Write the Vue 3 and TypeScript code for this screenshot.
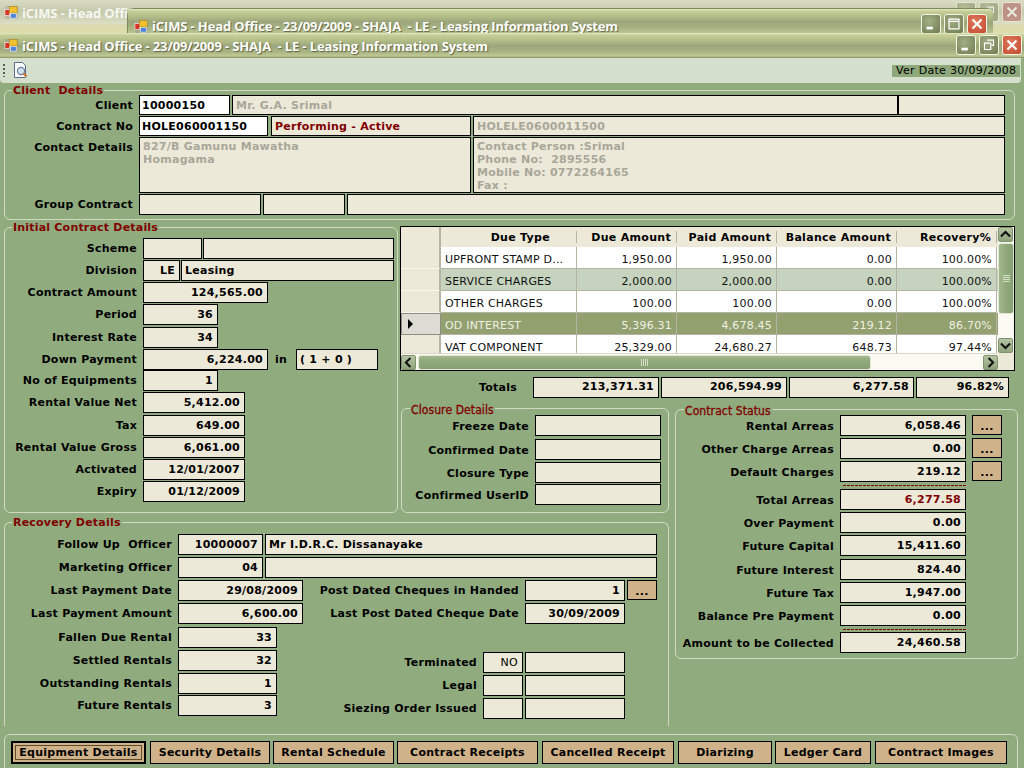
<script setup lang="ts">
interface FieldIn { x: number; e: number; t?: string; k?: string }
interface RowIn { y: number; h?: number; l?: string; f: FieldIn[] }

function mk(topY: number, leftX: number, rows: RowIn[]) {
  let bottom = topY
  return rows.map((r) => {
    const h = r.h ?? 21
    const mt = r.y - bottom
    bottom = r.y + h
    let right = r.f[0].x
    const lw = r.f[0].x - leftX
    const fields = r.f.map((f) => {
      const ml = f.x - right
      right = f.e
      return { ...f, ml, w: f.e - f.x }
    })
    return { label: r.l ?? '', h, mt, lw, fields }
  })
}

const R = 'r'
const sections = [
  {
    cls: 'client', title: 'Client  Details',
    cols: [{ rows: mk(91, 5, [
      { y: 95, h: 20, l: 'Client', f: [
        { x: 139, e: 230, t: '10000150', k: 'w' }, { x: 232, e: 898, t: 'Mr. G.A. Srimal', k: 'g' }, { x: 898, e: 1005 } ] },
      { y: 116, h: 20, l: 'Contract No', f: [
        { x: 139, e: 268, t: 'HOLE060001150', k: 'w' }, { x: 271, e: 471, t: 'Performing - Active', k: 'red' }, { x: 473, e: 1005, t: 'HOLELE0600011500', k: 'g' } ] },
      { y: 137, h: 56, l: 'Contact Details', f: [
        { x: 139, e: 471, t: '827/B Gamunu Mawatha\nHomagama', k: 'g m' },
        { x: 473, e: 1005, t: 'Contact Person :Srimal\nPhone No:  2895556\nMobile No: 0772264165\nFax :', k: 'g m' } ] },
      { y: 194, l: 'Group Contract', f: [ { x: 139, e: 261 }, { x: 263, e: 345 }, { x: 347, e: 1005 } ] },
    ]) }],
  },
  {
    cls: 'initial', title: 'Initial Contract Details',
    cols: [{ rows: mk(228, 5, [
      { y: 238, l: 'Scheme', f: [ { x: 143, e: 202 }, { x: 203, e: 394 } ] },
      { y: 260, l: 'Division', f: [ { x: 143, e: 180, t: 'LE', k: R }, { x: 181, e: 394, t: 'Leasing' } ] },
      { y: 282, l: 'Contract Amount', f: [ { x: 143, e: 268, t: '124,565.00', k: R } ] },
      { y: 304, l: 'Period', f: [ { x: 143, e: 218, t: '36', k: R } ] },
      { y: 327, l: 'Interest Rate', f: [ { x: 143, e: 218, t: '34', k: R } ] },
      { y: 349, l: 'Down Payment', f: [ { x: 143, e: 268, t: '6,224.00', k: R }, { x: 275, e: 296, t: 'in', k: 'plain' }, { x: 296, e: 378, t: '( 1 + 0 )' } ] },
      { y: 370, l: 'No of Equipments', f: [ { x: 143, e: 218, t: '1', k: R } ] },
      { y: 392, l: 'Rental Value Net', f: [ { x: 143, e: 245, t: '5,412.00', k: R } ] },
      { y: 415, l: 'Tax', f: [ { x: 143, e: 245, t: '649.00', k: R } ] },
      { y: 437, l: 'Rental Value Gross', f: [ { x: 143, e: 245, t: '6,061.00', k: R } ] },
      { y: 459, l: 'Activated', f: [ { x: 143, e: 245, t: '12/01/2007', k: R } ] },
      { y: 481, l: 'Expiry', f: [ { x: 143, e: 245, t: '01/12/2009', k: R } ] },
    ]) }],
  },
  {
    cls: 'closure', title: 'Closure Details',
    cols: [{ rows: mk(409, 402, [
      { y: 415, l: 'Freeze Date', f: [ { x: 535, e: 661 } ] },
      { y: 439, l: 'Confirmed Date', f: [ { x: 535, e: 661 } ] },
      { y: 462, l: 'Closure Type', f: [ { x: 535, e: 661 } ] },
      { y: 484, l: 'Confirmed UserID', f: [ { x: 535, e: 661 } ] },
    ]) }],
  },
  {
    cls: 'status', title: 'Contract Status',
    cols: [{ rows: mk(410, 676, [
      { y: 415, l: 'Rental Arreas', f: [ { x: 840, e: 966, t: '6,058.46', k: R }, { x: 972, e: 1002, t: '...', k: 'btn' } ] },
      { y: 438, l: 'Other Charge Arreas', f: [ { x: 840, e: 966, t: '0.00', k: R }, { x: 972, e: 1002, t: '...', k: 'btn' } ] },
      { y: 461, l: 'Default Charges', f: [ { x: 840, e: 966, t: '219.12', k: R }, { x: 972, e: 1002, t: '...', k: 'btn' } ] },
      { y: 485, h: 1, f: [ { x: 843, e: 966, k: 'dash' } ] },
      { y: 489, l: 'Total Arreas', f: [ { x: 840, e: 966, t: '6,277.58', k: 'r redt' } ] },
      { y: 512, l: 'Over Payment', f: [ { x: 840, e: 966, t: '0.00', k: R } ] },
      { y: 535, l: 'Future Capital', f: [ { x: 840, e: 966, t: '15,411.60', k: R } ] },
      { y: 559, l: 'Future Interest', f: [ { x: 840, e: 966, t: '824.40', k: R } ] },
      { y: 582, l: 'Future Tax', f: [ { x: 840, e: 966, t: '1,947.00', k: R } ] },
      { y: 605, l: 'Balance Pre Payment', f: [ { x: 840, e: 966, t: '0.00', k: R } ] },
      { y: 629, h: 1, f: [ { x: 843, e: 966, k: 'dash' } ] },
      { y: 632, l: 'Amount to be Collected', f: [ { x: 840, e: 966, t: '24,460.58', k: R } ] },
    ]) }],
  },
  {
    cls: 'recovery', title: 'Recovery Details',
    cols: [
      { rows: mk(523, 5, [
        { y: 534, l: 'Follow Up  Officer', f: [ { x: 178, e: 263, t: '10000007', k: R }, { x: 265, e: 657, t: 'Mr I.D.R.C. Dissanayake' } ] },
        { y: 557, l: 'Marketing Officer', f: [ { x: 178, e: 263, t: '04', k: R }, { x: 265, e: 657 } ] },
      ]) },
      { rows: mk(578, 5, [
        { y: 580, l: 'Last Payment Date', f: [ { x: 178, e: 303, t: '29/08/2009', k: R } ] },
        { y: 603, l: 'Last Payment Amount', f: [ { x: 178, e: 303, t: '6,600.00', k: R } ] },
        { y: 627, l: 'Fallen Due Rental', f: [ { x: 178, e: 277, t: '33', k: R } ] },
        { y: 650, l: 'Settled Rentals', f: [ { x: 178, e: 277, t: '32', k: R } ] },
        { y: 673, l: 'Outstanding Rentals', f: [ { x: 178, e: 277, t: '1', k: R } ] },
        { y: 695, l: 'Future Rentals', f: [ { x: 178, e: 277, t: '3', k: R } ] },
      ]) },
      { rows: mk(578, 303, [
        { y: 580, l: 'Post Dated Cheques in Handed', f: [ { x: 525, e: 625, t: '1', k: R }, { x: 627, e: 657, t: '...', k: 'btn' } ] },
        { y: 603, l: 'Last Post Dated Cheque Date', f: [ { x: 525, e: 625, t: '30/09/2009', k: R } ] },
        { y: 652, l: 'Terminated', f: [ { x: 483, e: 523, t: 'NO', k: 'r thin' }, { x: 525, e: 625 } ] },
        { y: 675, l: 'Legal', f: [ { x: 483, e: 523 }, { x: 525, e: 625 } ] },
        { y: 698, l: 'Siezing Order Issued', f: [ { x: 483, e: 523 }, { x: 525, e: 625 } ] },
      ]) },
    ],
  },
]

const gridHead = ['Due Type', 'Due Amount', 'Paid Amount', 'Balance Amount', 'Recovery%']
const gridRows = [
  { c: ['UPFRONT STAMP D...', '1,950.00', '1,950.00', '0.00', '100.00%'], k: '' },
  { c: ['SERVICE CHARGES', '2,000.00', '2,000.00', '0.00', '100.00%'], k: 'alt' },
  { c: ['OTHER CHARGES', '100.00', '100.00', '0.00', '100.00%'], k: '' },
  { c: ['OD INTEREST', '5,396.31', '4,678.45', '219.12', '86.70%'], k: 'sel' },
  { c: ['VAT COMPONENT', '25,329.00', '24,680.27', '648.73', '97.44%'], k: 'cut' },
]
const totals = ['213,371.31', '206,594.99', '6,277.58', '96.82%']
const tabs = ['Equipment Details', 'Security Details', 'Rental Schedule', 'Contract Receipts', 'Cancelled Receipt', 'Diarizing', 'Ledger Card', 'Contract Images']
const winTitle = 'iCIMS - Head Office - 23/09/2009 - SHAJA  - LE - Leasing Information System'
</script>

<template>
  <div class="desk">
    <!-- back window -->
    <div class="win win1">
      <div class="title inactive">
        <svg class="appicon" viewBox="0 0 16 16"><rect x="1" y="1" width="14" height="14" fill="#b9bca6"/><rect x="1" y="5" width="5" height="6" fill="#d8352a" stroke="#fff" stroke-width=".6"/><rect x="6" y="1.5" width="8" height="7" fill="#f2c12e" stroke="#a87a10" stroke-width=".6"/><rect x="7" y="9" width="6" height="5" fill="#4d84d8" stroke="#fff" stroke-width=".6"/></svg>
        <span class="ttext">iCIMS - Head Offi</span>
        <div class="wbtns faded">
          <span class="wb"><svg viewBox="0 0 20 20"><rect x="5" y="13" width="7" height="3" fill="#fff"/></svg></span>
          <span class="wb"><svg viewBox="0 0 20 20"><path d="M8 4.5h7v6h-2M5 8h7v7H5z" fill="none" stroke="#fff" stroke-width="1.3"/></svg></span>
          <span class="wb close"><svg viewBox="0 0 20 20"><path d="M5 5l10 10M15 5L5 15" stroke="#fff" stroke-width="2.4"/></svg></span>
        </div>
      </div>
    </div>

    <!-- middle window -->
    <div class="win win2">
      <div class="title">
        <svg class="appicon" viewBox="0 0 16 16"><rect x="1" y="1" width="14" height="14" fill="#a3a98c"/><rect x="1" y="5" width="5" height="6" fill="#d8352a" stroke="#fff" stroke-width=".6"/><rect x="6" y="1.5" width="8" height="7" fill="#f2c12e" stroke="#a87a10" stroke-width=".6"/><rect x="7" y="9" width="6" height="5" fill="#4d84d8" stroke="#fff" stroke-width=".6"/></svg>
        <span class="ttext">{{ winTitle }}</span>
        <div class="wbtns">
          <span class="wb"><svg viewBox="0 0 20 20"><rect x="5" y="13" width="7" height="3" fill="#fff"/></svg></span>
          <span class="wb"><svg viewBox="0 0 20 20"><path d="M4.5 4.5h11v11h-11zM4.5 7h11" fill="none" stroke="#fff" stroke-width="1.4"/></svg></span>
          <span class="wb close"><svg viewBox="0 0 20 20"><path d="M5 5l10 10M15 5L5 15" stroke="#fff" stroke-width="2.4"/></svg></span>
        </div>
      </div>
    </div>

    <!-- main window -->
    <div class="win win3">
      <div class="title">
        <svg class="appicon" viewBox="0 0 16 16"><rect x="1" y="1" width="14" height="14" fill="#a3a98c"/><rect x="1" y="5" width="5" height="6" fill="#d8352a" stroke="#fff" stroke-width=".6"/><rect x="6" y="1.5" width="8" height="7" fill="#f2c12e" stroke="#a87a10" stroke-width=".6"/><rect x="7" y="9" width="6" height="5" fill="#4d84d8" stroke="#fff" stroke-width=".6"/></svg>
        <span class="ttext">{{ winTitle }}</span>
        <div class="wbtns">
          <span class="wb"><svg viewBox="0 0 20 20"><rect x="5" y="13" width="7" height="3" fill="#fff"/></svg></span>
          <span class="wb"><svg viewBox="0 0 20 20"><path d="M8 4.5h7v6h-2M5 8h7v7H5z" fill="none" stroke="#fff" stroke-width="1.3"/></svg></span>
          <span class="wb close"><svg viewBox="0 0 20 20"><path d="M5 5l10 10M15 5L5 15" stroke="#fff" stroke-width="2.4"/></svg></span>
        </div>
      </div>

      <div class="toolbar">
        <span class="grip"></span>
        <svg class="preview" viewBox="0 0 16 17">
          <path d="M1.5 .5h8l3 3v12h-11z" fill="#fff" stroke="#5a6a90"/>
          <circle cx="8" cy="9" r="3.6" fill="#cfe0ee" stroke="#6b7f99" stroke-width="1.2"/>
          <path d="M10.5 11.5l3 3" stroke="#c8792a" stroke-width="2.4"/>
        </svg>
        <span class="verdate">Ver Date 30/09/2008</span>
      </div>

      <div class="content">
        <section v-for="s in sections" :key="s.cls" class="box" :class="s.cls">
          <span class="legend">{{ s.title }}</span>
          <div class="cols">
            <div v-for="(c, ci) in s.cols" :key="ci" class="col">
              <div
                v-for="(r, ri) in c.rows"
                :key="ri"
                class="row"
                :style="{ marginTop: r.mt + 'px', height: r.h + 'px' }"
              >
                <label class="lbl" :style="{ width: r.lw + 'px' }">{{ r.label }}</label>
                <span
                  v-for="(f, fi) in r.fields"
                  :key="fi"
                  class="fld"
                  :class="f.k"
                  :style="{ width: f.w + 'px', marginLeft: f.ml + 'px' }"
                >{{ f.t }}</span>
              </div>
            </div>
          </div>
        </section>

        <div class="gridwrap">
          <div class="dgrid">
            <div class="gleft">
              <div class="grow ghead">
                <span class="rh"></span>
                <span v-for="h in gridHead" :key="h" class="hc">{{ h }}</span>
              </div>
              <div class="gbody">
                <div v-for="(r, i) in gridRows" :key="i" class="grow drow" :class="r.k">
                  <span class="rh"><svg v-if="r.k === 'sel'" viewBox="0 0 8 10" class="arrow"><path d="M1 0l5 5-5 5z" fill="#000"/></svg></span>
                  <span v-for="(c, j) in r.c" :key="j" class="dc">{{ c }}</span>
                </div>
              </div>
              <div class="hscroll">
                <span class="sbtn"><svg viewBox="0 0 10 10"><path d="M6.5 1.5L3 5l3.5 3.5" fill="none" stroke="#111" stroke-width="1.6"/></svg></span>
                <span class="hthumb"><i></i></span>
                <span class="sbtn"><svg viewBox="0 0 10 10"><path d="M3.5 1.5L7 5 3.5 8.5" fill="none" stroke="#111" stroke-width="1.6"/></svg></span>
              </div>
            </div>
            <div class="vscroll">
              <span class="sbtn"><svg viewBox="0 0 10 10"><path d="M1.5 6.5L5 3l3.5 3.5" fill="none" stroke="#111" stroke-width="1.6"/></svg></span>
              <span class="vthumb"><i></i></span>
              <span class="vspace"></span>
              <span class="sbtn"><svg viewBox="0 0 10 10"><path d="M1.5 3.5L5 7l3.5-3.5" fill="none" stroke="#111" stroke-width="1.6"/></svg></span>
              <span class="corner"></span>
            </div>
          </div>
          <div class="totals">
            <span class="tlbl">Totals</span>
            <span v-for="t in totals" :key="t" class="fld r tfld">{{ t }}</span>
          </div>
        </div>

        <div class="box tabsbox">
          <button v-for="(t, i) in tabs" :key="t" class="tab" :class="'t' + i"><span>{{ t }}</span></button>
        </div>
      </div>
    </div>
  </div>
</template>

<style>
body { margin: 0; background: #ece9d8; overflow: hidden; }
</style>

<style scoped>
.desk {
  position: relative;
  width: 1024px;
  height: 768px;
  overflow: hidden;
  background: #ece9d8;
  font-family: "DejaVu Sans", Verdana, sans-serif;
}
.win { position: absolute; }
.win1 { left: 0; top: 0; width: 1024px; height: 40px; background: #dcdcae; }
.win2 { left: 127px; top: 8px; width: 866px; height: 40px; border-radius: 7px 7px 0 0; overflow: hidden; }
.win3 { left: 0; top: 33px; width: 1024px; height: 735px; background: #90ac7f; }

.title {
  position: relative;
  height: 25px;
  display: flex;
  align-items: center;
  padding-left: 4px;
  box-sizing: border-box;
  background: linear-gradient(#e6ebc4 0, #c6cf98 2px, #b0bb86 8px, #9aa67b 13px, #a9b483 19px, #c0c995 23px, #818b60 25px);
}
.win2 .title {
  border-top: 1px solid #7e8a5e;
  border-left: 1px solid #7e8a5e;
  height: 35px;
  padding-left: 6px;
  background: linear-gradient(#e6ebc4 0, #c6cf98 2px, #b0bb86 8px, #9aa67b 13px, #a9b483 19px, #c0c995 25px);
}
.inactive { background: linear-gradient(#d9dcc4, #c5c9aa 12px, #dcdfc4 24px, #cfd0a8 25px); }
.appicon { width: 15px; height: 15px; flex: none; }
.ttext {
  margin-left: 3px;
  font: bold 13px "Open Sans", "Liberation Sans", sans-serif;
  letter-spacing: -.13px;
  color: #fff;
  white-space: pre;
  text-shadow: 1px 1px 1px #5d6545;
}
.inactive .ttext { opacity: .85; text-shadow: none; }
.wbtns { position: absolute; top: 2px; right: 2px; display: flex; gap: 3px; }
.win2 .wbtns { top: 5px; right: 6px; }
.wb {
  width: 20px;
  height: 20px;
  box-sizing: border-box;
  border: 1px solid #f4f6e6;
  border-radius: 3px;
  background: radial-gradient(circle at 40% 35%, #a2ae84, #6e7a50);
  display: block;
}
.wb svg { display: block; width: 18px; height: 18px; }
.wb.close { background: radial-gradient(circle at 40% 35%, #e0785c, #c04a30); }
.faded { opacity: .55; }
.faded .wb.close { background: #b46060; }

.toolbar {
  position: relative;
  height: 25px;
  margin-right: 3px;
  background: #d4dfcc;
  border-radius: 0 0 4px 4px;
  display: flex;
  align-items: center;
}
.grip {
  width: 2px;
  height: 13px;
  margin-left: 3px;
  background: repeating-linear-gradient(#56604a 0 2px, transparent 2px 4px);
}
.preview { width: 16px; height: 17px; margin-left: 8px; }
.verdate {
  margin-left: auto;
  margin-right: 1px;
  padding: 0 4px;
  width: 120px;
  height: 12px;
  line-height: 12px;
  background: #8fa97d;
  font-size: 11px;
  letter-spacing: .3px;
  color: #000;
  white-space: nowrap;
}

.content {
  display: grid;
  grid-template-columns: 394px 268px 343px;
  column-gap: 3px;
  grid-template-rows: 136px 182px 105px 9px 204px auto;
  padding-left: 4px;
  padding-top: 7px;
}
.content > .client { grid-column: 1 / 4; grid-row: 1; width: 1011px; height: 130px; }
.box {
  position: relative;
  box-sizing: border-box;
  border: 1px solid #cfdac0;
  border-radius: 6px;
}
.legend {
  position: absolute;
  top: -7px;
  left: 7px;
  padding: 0 1px;
  height: 14px;
  line-height: 14px;
  background: #90ac7f;
  color: #800000;
  font-weight: bold;
  font-size: 11px;
  letter-spacing: .2px;
  white-space: pre;
}
.closure .legend, .status .legend {
  top: -6px;
  left: 8px;
  font: 12px "DejaVu Sans Condensed", "DejaVu Sans", sans-serif;
  line-height: 14px;
  letter-spacing: .1px;
  -webkit-text-stroke: .3px #800000;
}
.initial { grid-column: 1; grid-row: 2 / 4; margin-top: 1px; }
.gridwrap { grid-column: 2 / 4; grid-row: 2; margin-left: -1px; }
.closure { grid-column: 2; grid-row: 3; }
.status { grid-column: 3; grid-row: 3 / 6; margin: 1px 0 0 3px; height: 250px; width: 343px; }
.recovery {
  grid-column: 1 / 3;
  grid-row: 5;
  width: 665px;
  border-bottom: none;
  border-radius: 6px 6px 0 0;
}
.tabsbox {
  grid-column: 1 / 4;
  grid-row: 6;
  margin-top: 8px;
  width: 1014px;
  height: 60px;
}

.cols { display: flex; flex-wrap: wrap; }
.col { flex: 0 0 100%; }
.recovery .col:nth-child(2) { flex: 0 0 298px; }
.recovery .col:nth-child(3) { flex: 0 0 365px; }

.row { display: flex; align-items: stretch; }
.lbl {
  box-sizing: border-box;
  flex: none;
  padding-right: 6px;
  text-align: right;
  font-weight: bold;
  font-size: 11px;
  letter-spacing: .25px;
  line-height: 22px;
  color: #000;
  white-space: pre;
}
.closure .lbl { line-height: 23px; }
.status .lbl { line-height: 23px; }
.fld {
  box-sizing: border-box;
  flex: none;
  display: block;
  border: 1px solid #000;
  background: #ece9d8;
  font-weight: bold;
  font-size: 11px;
  letter-spacing: .25px;
  line-height: 20px;
  padding: 0 3px;
  white-space: pre-wrap;
  overflow: hidden;
  color: #000;
}
.client .fld { line-height: 19px; }
.fld.r { text-align: right; padding-right: 4px; }
.fld.w { background: #fff; padding-left: 2px; }
.fld.g { color: #a8a799; }
.client .fld.m { line-height: 13px; padding-top: 2px; }
.fld.red { color: #800000; }
.fld.redt { color: #800000; }
.fld.thin { font-weight: normal; }
.fld.plain { border: none; background: none; padding: 0; line-height: 21px; }
.fld.dash { border: none; height: 1px; background: repeating-linear-gradient(90deg, #800000 0 3px, transparent 3px 4px); }
.fld.btn {
  background: #cfb28a;
  height: 20px;
  text-align: center;
  line-height: 18px;
  font-size: 11px;
  padding: 2px 0 0;
}

.dgrid {
  box-sizing: border-box;
  width: 615px;
  height: 145px;
  border: 1px solid #000;
  background: #ece9d8;
  display: flex;
}
.gleft { width: 597px; display: flex; flex-direction: column; }
.grow { display: flex; }
.rh { width: 40px; flex: none; box-sizing: border-box; border-right: 2px solid #b5b3a2; }
.ghead { height: 20px; background: #ece9d8; }
.hc {
  box-sizing: border-box;
  font-weight: bold;
  font-size: 11px;
  letter-spacing: .3px;
  line-height: 22px;
  text-align: right;
  padding-right: 6px;
  width: 100px;
  position: relative;
}
.hc::after {
  content: "";
  position: absolute;
  right: 0;
  top: 4px;
  height: 12px;
  border-right: 1px solid #b5b3a2;
}
.hc:nth-child(2) { width: 136px; padding-right: 27px; }
.hc:nth-child(5) { width: 120px; }
.gbody { height: 106px; overflow: hidden; }
.drow { height: 22px; background: #fff; }
.drow .rh { background: #ece9d8; border-bottom: 1px solid #f8f7ee; position: relative; }
.dc {
  box-sizing: border-box;
  width: 100px;
  font-size: 11px;
  letter-spacing: .2px;
  line-height: 25px;
  text-align: right;
  padding-right: 4px;
  color: #111;
  border-right: 1px solid #b5b3a2;
  border-bottom: 1px solid #b5b3a2;
  white-space: nowrap;
}
.dc:nth-child(2) { width: 136px; text-align: left; padding-left: 4px; }
.dc:nth-child(5) { width: 120px; }
.alt { background: #c5d3bf; }
.sel { background: #93a06f; }
.sel .dc { color: #eef0e2; }
.sel .rh { background: #dcdcd4; border: 1px solid #8e8e80; }
.arrow { position: absolute; left: 5px; top: 5px; width: 8px; height: 10px; }
.hscroll {
  height: 17px;
  display: flex;
  align-items: center;
  background: #fafaf2;
  border-top: 1px solid #d8d8c8;
  box-sizing: border-box;
}
.sbtn {
  flex: none;
  width: 15px;
  height: 15px;
  box-sizing: border-box;
  border: 1px solid #80926e;
  border-radius: 2px;
  background: linear-gradient(#b6c4a4, #8ea47c);
  display: block;
}
.sbtn svg { display: block; width: 13px; height: 13px; }
.hthumb {
  width: 453px;
  height: 15px;
  margin: 0 auto 0 2px;
  box-sizing: border-box;
  border: 1px solid #dfe6d2;
  border-radius: 3px;
  background: linear-gradient(#a4b88e, #8fa87c 40%, #86a074);
  display: flex;
  align-items: center;
  justify-content: center;
}
.hthumb i { width: 8px; height: 7px; background: repeating-linear-gradient(90deg, #d8e0c8 0 1px, transparent 1px 2px); }
.vscroll { width: 16px; display: flex; flex-direction: column; background: #fafaf2; }
.vthumb {
  height: 71px;
  margin-top: 1px;
  box-sizing: border-box;
  border: 1px solid #dfe6d2;
  border-radius: 3px;
  background: linear-gradient(90deg, #a4b88e, #8fa87c 50%, #86a074);
  display: flex;
  align-items: center;
  justify-content: center;
}
.vthumb i { width: 7px; height: 8px; background: repeating-linear-gradient(#d8e0c8 0 1px, transparent 1px 2px); }
.vspace { flex: 1; }
.corner { height: 17px; background: #ece9d8; }

.totals { display: flex; margin-top: 6px; height: 21px; }
.tlbl { width: 117px; margin-right: 16px; text-align: right; font-weight: bold; font-size: 11px; letter-spacing: .25px; line-height: 21px; }
.tfld { margin-right: 2px; line-height: 18px; }
.tfld:nth-child(2), .tfld:nth-child(3) { width: 126px; }
.tfld:nth-child(4) { width: 125px; }
.tfld:nth-child(5) { width: 93px; }

.tabsbox { display: flex; padding: 6px 0 0 6px; gap: 3px; align-items: flex-start; }
.tab {
  flex: none;
  box-sizing: border-box;
  height: 23px;
  padding: 0;
  border: 1px solid #000;
  border-radius: 0;
  background: #cfb28a;
  font: bold 11px "DejaVu Sans", sans-serif;
  letter-spacing: .25px;
  color: #000;
}
.t0 { width: 135px; border-width: 2px; margin-right: 1px; }
.t0 span { display: block; margin: 1px 2px; border: 1px solid #5e4a26; line-height: 13px; }
.t1 { width: 120px; }
.t2 { width: 121px; }
.t3 { width: 141px; }
.t4 { width: 132px; margin-left: 1px; }
.t5 { width: 94px; margin-left: 1px; }
.t6 { width: 96px; }
.t7 { width: 132px; margin-left: 1px; }
</style>
